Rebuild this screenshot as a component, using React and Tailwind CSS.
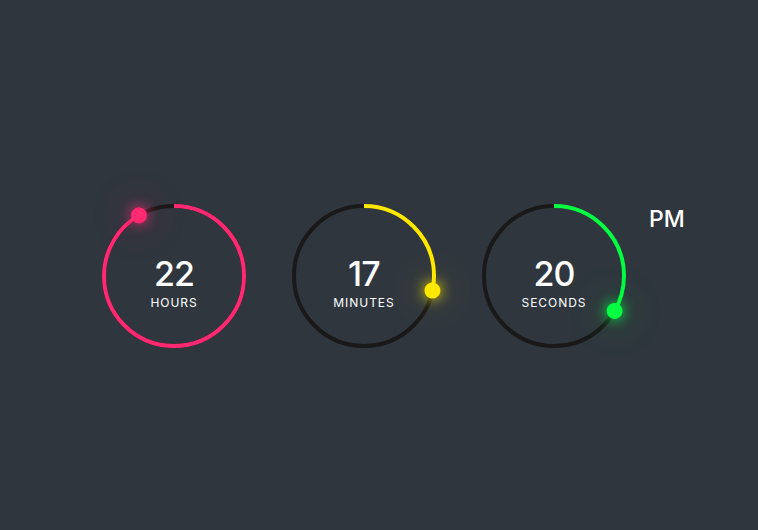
const UNITS = [
  { value: 22, max: 24, label: 'Hours', color: '#ff2972', glow: 'shadow-[0_0_14px_#ff2972,0_0_40px_rgba(255,41,114,0.45)]' },
  { value: 17, max: 60, label: 'Minutes', color: '#fee800', glow: 'shadow-[0_0_14px_#fee800,0_0_40px_rgba(254,232,0,0.45)]' },
  { value: 20, max: 60, label: 'Seconds', color: '#04fc43', glow: 'shadow-[0_0_14px_#04fc43,0_0_40px_rgba(4,252,67,0.45)]' },
]

const R = 70
const LEN = 2 * Math.PI * R

function Ring({ value, max, label, color, glow }) {
  const frac = value / max
  return (
    <div className="relative w-[150px] h-[150px] flex items-center justify-center">
      <svg className="absolute inset-0 -rotate-90" width="150" height="150" viewBox="0 0 150 150">
        <circle cx="75" cy="75" r={R} fill="none" stroke="#191919" strokeWidth="4" />
        <circle
          cx="75"
          cy="75"
          r={R}
          fill="none"
          stroke={color}
          strokeWidth="4"
          strokeDasharray={LEN}
          strokeDashoffset={LEN * (1 - frac)}
        />
      </svg>

      {/* dot riding on the arc */}
      <div className="absolute inset-0" style={{ transform: `rotate(${frac * 360}deg)` }}>
        <span
          className={`absolute left-1/2 top-[-3px] -ml-2 w-4 h-4 rounded-full ${glow}`}
          style={{ background: color }}
        />
      </div>

      <div className="relative pt-[14px] flex flex-col items-center text-white">
        <span className="text-[34px] font-medium leading-none tracking-tight">{value}</span>
        <span className="mt-[6px] text-[12px] uppercase tracking-[0.08em] leading-none">{label}</span>
      </div>
    </div>
  )
}

export default function App() {
  return (
    <div
      className="min-h-screen bg-[#2f363e] flex justify-center pt-[201px]"
      style={{ fontFamily: 'Inter, "Noto Sans", sans-serif' }}
    >
      <div className="relative flex gap-10 h-[150px] mr-[30px]">
        {UNITS.map((u) => (
          <Ring key={u.label} {...u} />
        ))}
        <span className="absolute left-full top-[7px] ml-5 text-[23px] font-medium text-white leading-none">
          PM
        </span>
      </div>
    </div>
  )
}
